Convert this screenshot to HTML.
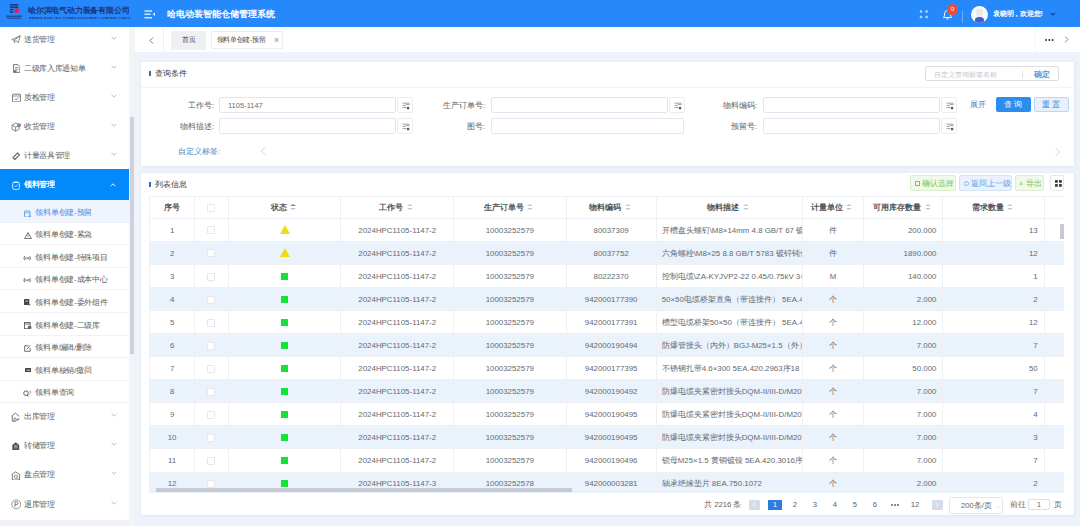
<!DOCTYPE html>
<html><head><meta charset="utf-8">
<style>
*{box-sizing:border-box;margin:0;padding:0}
html,body{width:1080px;height:526px;overflow:hidden;background:#eef2fb;font-family:"Liberation Sans",sans-serif;color:#606266;font-size:8px}
.abs{position:absolute}
#hdr{position:absolute;left:0;top:0;width:1080px;height:27px;background:#2588fb}
#side{position:absolute;left:0;top:27px;width:129px;height:499px;background:#fff}
#sbar{position:absolute;left:129px;top:27px;width:6px;height:499px;background:#f3f4f8}
#tabs{position:absolute;left:135px;top:27px;width:945px;height:25px;background:#fff}
.card{position:absolute;background:#fff;box-shadow:0 0 3px 0.5px rgba(70,80,100,0.10)}
.mi{position:absolute;left:0;width:130px;height:29px}
.mi .t{position:absolute;left:24px;top:0;line-height:29px;font-size:8px;color:#606266}
.mi .ic{position:absolute;left:11px;top:10px;width:9px;height:9px}
.mi .ch{position:absolute;left:110px;top:11px;width:6px;height:6px}
.si{position:absolute;left:0;width:130px;height:22.5px}
.si .t{position:absolute;left:35px;top:0;line-height:22.5px;font-size:7.7px;color:#606266}
.si .ic{position:absolute;left:23px;top:7px;width:8px;height:8px}
.inp{position:absolute;height:16px;border:0.7px solid #e2e5eb;border-radius:2px;background:#fff}
.ib{position:absolute;width:16px;height:16px;border:0.7px solid #eaecf0;border-radius:2px;background:#fff}
.lbl{position:absolute;font-size:7.5px;color:#606266;text-align:right;line-height:16px;padding-top:1px}
table{border-collapse:collapse;table-layout:fixed}
td,th{border:0.6px solid #eff0f4;height:23.05px;text-align:center;font-size:7.9px;color:#666a70;font-weight:normal;white-space:nowrap;overflow:hidden}
th{height:22px;color:#505357;font-weight:bold}
tr.s td{background:#eaf2fc}
.cb{display:inline-block;width:8px;height:8px;border:0.6px solid #e6e7eb;border-radius:1px;background:#fff;vertical-align:middle}
.tri{display:inline-block;width:0;height:0;border-left:5px solid transparent;border-right:5px solid transparent;border-bottom:9.3px solid #ecdc10;vertical-align:middle;position:relative;top:-1px}
.sq{display:inline-block;width:7px;height:7px;background:#14e23a;vertical-align:middle}
.sort{display:inline-block;width:6px;height:7px;vertical-align:middle;margin-left:3.5px;margin-right:2.5px;position:relative;top:-0.5px}
.sort:before{content:"";position:absolute;left:0;top:0;border-left:3px solid transparent;border-right:3px solid transparent;border-bottom:2.8px solid #c6c9cf}
.sort:after{content:"";position:absolute;left:0;top:4.2px;border-left:3px solid transparent;border-right:3px solid transparent;border-top:2.8px solid #c6c9cf}
.sort.a:before{border-bottom-color:#5b8fd0}
.sort.a:after{border-top-color:#a9c6ea}
td.l{text-align:left;padding-left:5px}
td.r{text-align:right;padding-right:6px}
.pg{position:absolute;top:500px;font-size:7.7px;color:#606266;line-height:10px;text-align:center}
</style></head><body>

<!-- HEADER -->
<div id="hdr">
  <!-- logo -->
  <svg class="abs" style="left:5px;top:3px" width="18" height="17" viewBox="0 0 18 17"><g fill="#1c3a8e"><rect x="4.8" y="1" width="8.5" height="1.6"/><rect x="4.8" y="3.4" width="8.5" height="1.6"/><rect x="4.8" y="5.8" width="3.6" height="1.6"/><rect x="4.8" y="8.2" width="3.6" height="1.6"/></g><circle cx="11.7" cy="7.5" r="2.6" fill="#d02a5a"/><g fill="#1c3a8e" opacity="0.9"><rect x="1" y="12.6" width="16" height="1.2"/><rect x="2" y="14.6" width="14" height="1"/></g></svg>
  <div class="abs" style="left:28px;top:5.5px;font-size:7.6px;color:#1b3277;font-weight:bold;letter-spacing:-0.2px;white-space:nowrap;line-height:9px">哈尔滨电气动力装备有限公司</div>
  <div class="abs" style="left:29px;top:16.5px;width:101px;height:2.4px;overflow:hidden"><div style="transform:scale(0.5);transform-origin:0 0;font-size:6px;line-height:5px;color:#1b3277;font-weight:bold;white-space:nowrap;letter-spacing:0.75px">HARBIN ELECTRIC POWER EQUIPMENT COMPANY LIMITED</div></div>
  <!-- menu icon -->
  <svg class="abs" style="left:143.5px;top:9.5px" width="12" height="9" viewBox="0 0 12 9"><rect x="0.5" y="0.4" width="7.5" height="1.3" fill="#eaf6ff"/><rect x="0.5" y="3.6" width="6" height="1.3" fill="#eaf6ff"/><rect x="0.5" y="7.1" width="7.5" height="1.3" fill="#eaf6ff"/><path d="M8.6 4.25 L11 2.6 L11 5.9 Z" fill="#eaf6ff"/></svg>
  <div class="abs" style="left:167px;top:7.5px;font-size:9.2px;color:#fff;font-weight:bold;font-family:'Liberation Serif',serif;white-space:nowrap;line-height:12px">哈电动装智能仓储管理系统</div>
  <!-- right icons -->
  <svg class="abs" style="left:918px;top:9px" width="12" height="11" viewBox="0 0 12 11"><g fill="#a6dcff"><rect x="1.8" y="1.3" width="2.4" height="2.4" rx="0.6"/><rect x="7.4" y="1.3" width="2.4" height="2.4" rx="0.6"/><rect x="1.8" y="6.8" width="2.4" height="2.4" rx="0.6"/><rect x="7.4" y="6.8" width="2.4" height="2.4" rx="0.6"/></g></svg>
  <svg class="abs" style="left:942px;top:8px" width="11" height="12" viewBox="0 0 11 12"><path d="M1.5 9.5 Q2.6 8.2 2.6 6 Q2.6 2.6 5.5 2.4 Q8.4 2.6 8.4 6 Q8.4 8.2 9.5 9.5 Z" fill="none" stroke="#fff" stroke-width="0.9" stroke-linejoin="round"/><path d="M4.3 10.9 H6.7" stroke="#fff" stroke-width="0.9"/></svg>
  <div class="abs" style="left:947px;top:4px;width:11px;height:11px;border-radius:50%;background:#e8503f;color:#fff;font-size:6px;text-align:center;line-height:11px">0</div>
  <div class="abs" style="left:962px;top:11px;width:1px;height:12px;background:#6aaefc"></div>
  <div class="abs" style="left:970.8px;top:5.7px;width:17px;height:17px;border-radius:50%;background:#f6f9fd;overflow:hidden">
    <div class="abs" style="left:5px;top:3.5px;width:7px;height:8px;border-radius:45%;background:#e9ebf1;border-top:1.2px solid #f0dcc0"></div>
    <div class="abs" style="left:4.2px;top:11.8px;width:8.6px;height:6px;border-radius:50% 50% 0 0;background:#3f5fd0"></div>
  </div>
  <div class="abs" style="left:993px;top:8.5px;font-size:7.1px;color:#fff;font-weight:bold;white-space:nowrap;line-height:10px;letter-spacing:-0.2px">袁晓明，欢迎您!</div>
  <div class="abs" style="left:1050px;top:13px;border-left:3px solid transparent;border-right:3px solid transparent;border-top:3.5px solid #1f4fa8"></div>
</div>

<!-- SIDEBAR -->
<div id="side">
<div class="abs" style="left:24px;top:7.0px;font-size:7.6px;line-height:12px;color:#5c5f64;white-space:nowrap;letter-spacing:-0.35px">送货管理</div>
<svg class="abs" style="left:10.5px;top:7.5px" width="10" height="8.5" viewBox="0 0 10 8.5"><path d="M0.8 4.6 L9.2 0.8 L7.4 7.6 L4.8 5.6 L3.4 7.6 L3.2 5.2 Z M3.2 5.2 L9.2 0.8" fill="none" stroke="#6a6d73" stroke-width="0.8" stroke-linejoin="round"/></svg>
<svg class="abs" style="left:110.5px;top:8.5px" width="6" height="4" viewBox="0 0 6 4"><path d="M0.5 0.7 L3 3.2 L5.5 0.7" fill="none" stroke="#a9adb5" stroke-width="0.8"/></svg>
<div class="abs" style="left:24px;top:36.0px;font-size:7.6px;line-height:12px;color:#5c5f64;white-space:nowrap;letter-spacing:-0.35px">二级库入库通知单</div>
<svg class="abs" style="left:12.5px;top:36.5px" width="7.5" height="9" viewBox="0 0 7.5 9"><path d="M0.6 0.6 H5 L6.9 2.5 V8.4 H0.6 Z" fill="none" stroke="#6a6d73" stroke-width="0.9"/><path d="M2 3.5 H5.5 M2 5.3 H5.5" stroke="#6a6d73" stroke-width="0.7"/><rect x="0.6" y="6.3" width="3" height="2.1" fill="#6a6d73"/></svg>
<svg class="abs" style="left:110.5px;top:37.5px" width="6" height="4" viewBox="0 0 6 4"><path d="M0.5 0.7 L3 3.2 L5.5 0.7" fill="none" stroke="#a9adb5" stroke-width="0.8"/></svg>
<div class="abs" style="left:24px;top:65.0px;font-size:7.6px;line-height:12px;color:#5c5f64;white-space:nowrap;letter-spacing:-0.35px">质检管理</div>
<svg class="abs" style="left:11.5px;top:65.5px" width="9" height="9.5" viewBox="0 0 9 9.5"><rect x="0.6" y="1.2" width="7.8" height="7.7" rx="0.6" fill="none" stroke="#6a6d73" stroke-width="0.9"/><path d="M0.6 3 H8.4" stroke="#6a6d73" stroke-width="0.7"/><path d="M2.8 5.6 L4.2 6.9 L6.4 4.5" fill="none" stroke="#6a6d73" stroke-width="0.8"/></svg>
<svg class="abs" style="left:110.5px;top:66.5px" width="6" height="4" viewBox="0 0 6 4"><path d="M0.5 0.7 L3 3.2 L5.5 0.7" fill="none" stroke="#a9adb5" stroke-width="0.8"/></svg>
<div class="abs" style="left:24px;top:94.0px;font-size:7.6px;line-height:12px;color:#5c5f64;white-space:nowrap;letter-spacing:-0.35px">收货管理</div>
<svg class="abs" style="left:10.8px;top:94.5px" width="10.5" height="10" viewBox="0 0 10.5 10"><path d="M1 3.2 L4.8 1.2 L8.2 3 V7.2 L4.6 9.2 L1 7.2 Z M1 3.2 L4.6 5.2 L8.2 3 M4.6 5.2 V9.2" fill="none" stroke="#6a6d73" stroke-width="0.8" stroke-linejoin="round"/><circle cx="8" cy="3.2" r="2" fill="#85888d"/></svg>
<svg class="abs" style="left:110.5px;top:95.5px" width="6" height="4" viewBox="0 0 6 4"><path d="M0.5 0.7 L3 3.2 L5.5 0.7" fill="none" stroke="#a9adb5" stroke-width="0.8"/></svg>
<div class="abs" style="left:24px;top:123.0px;font-size:7.6px;line-height:12px;color:#5c5f64;white-space:nowrap;letter-spacing:-0.35px">计量器具管理</div>
<svg class="abs" style="left:11.5px;top:124.5px" width="8.5" height="8.5" viewBox="0 0 8.5 8.5"><path d="M5.6 1 L7.5 2.9 L2.9 7.5 L1 5.6 Z" fill="none" stroke="#6a6d73" stroke-width="1.2" stroke-linejoin="round"/></svg>
<svg class="abs" style="left:110.5px;top:124.5px" width="6" height="4" viewBox="0 0 6 4"><path d="M0.5 0.7 L3 3.2 L5.5 0.7" fill="none" stroke="#a9adb5" stroke-width="0.8"/></svg>
<div class="abs" style="left:24px;top:384.0px;font-size:7.6px;line-height:12px;color:#5c5f64;white-space:nowrap;letter-spacing:-0.35px">出库管理</div>
<svg class="abs" style="left:11.3px;top:384.5px" width="9" height="10" viewBox="0 0 9 10"><path d="M0.7 4.2 L4.3 1 L8.3 4.4 M1.3 3.8 V9.2 H5" fill="none" stroke="#6a6d73" stroke-width="0.9" stroke-linejoin="round"/><path d="M3 9.2 V6 H5 V9.2" fill="none" stroke="#6a6d73" stroke-width="0.7"/><path d="M5.5 8.5 L8.2 6.8" stroke="#6a6d73" stroke-width="1.2"/></svg>
<svg class="abs" style="left:110.5px;top:385.5px" width="6" height="4" viewBox="0 0 6 4"><path d="M0.5 0.7 L3 3.2 L5.5 0.7" fill="none" stroke="#a9adb5" stroke-width="0.8"/></svg>
<div class="abs" style="left:24px;top:413.0px;font-size:7.6px;line-height:12px;color:#5c5f64;white-space:nowrap;letter-spacing:-0.35px">转储管理</div>
<svg class="abs" style="left:12.3px;top:414.5px" width="7.5" height="8.5" viewBox="0 0 7.5 8.5"><path d="M0.3 3 L3.75 0.3 L7.2 3 V8.3 H0.3 Z" fill="#505358"/><rect x="2" y="3.4" width="3.5" height="1" fill="#fff" opacity=".7"/><rect x="2" y="5.3" width="3.5" height="1" fill="#fff" opacity=".5"/></svg>
<svg class="abs" style="left:110.5px;top:414.5px" width="6" height="4" viewBox="0 0 6 4"><path d="M0.5 0.7 L3 3.2 L5.5 0.7" fill="none" stroke="#a9adb5" stroke-width="0.8"/></svg>
<div class="abs" style="left:24px;top:442.0px;font-size:7.6px;line-height:12px;color:#5c5f64;white-space:nowrap;letter-spacing:-0.35px">盘点管理</div>
<svg class="abs" style="left:11px;top:443.5px" width="9.5" height="9.5" viewBox="0 0 9.5 9.5"><path d="M0.7 3.6 L4.6 0.8 L8.6 3.6 V9 H1.3 V3.6" fill="none" stroke="#6a6d73" stroke-width="0.9" stroke-linejoin="round"/><circle cx="4.8" cy="5.6" r="1.6" fill="none" stroke="#6a6d73" stroke-width="0.8"/><path d="M5.9 6.7 L7.6 8.4" stroke="#6a6d73" stroke-width="0.8"/></svg>
<svg class="abs" style="left:110.5px;top:443.5px" width="6" height="4" viewBox="0 0 6 4"><path d="M0.5 0.7 L3 3.2 L5.5 0.7" fill="none" stroke="#a9adb5" stroke-width="0.8"/></svg>
<div class="abs" style="left:24px;top:472.0px;font-size:7.6px;line-height:12px;color:#5c5f64;white-space:nowrap;letter-spacing:-0.35px">退库管理</div>
<svg class="abs" style="left:10.8px;top:472px" width="10.5" height="10.5" viewBox="0 0 10.5 10.5"><circle cx="5.25" cy="5.25" r="4.5" fill="none" stroke="#7a7d82" stroke-width="0.8"/><path d="M4 7.8 V2.8 H5.8 Q7 2.8 7 4.2 Q7 5.6 5.8 5.6 H4" fill="none" stroke="#7a7d82" stroke-width="1"/></svg>
<svg class="abs" style="left:110.5px;top:473.5px" width="6" height="4" viewBox="0 0 6 4"><path d="M0.5 0.7 L3 3.2 L5.5 0.7" fill="none" stroke="#a9adb5" stroke-width="0.8"/></svg>
<div class="abs" style="left:0;top:142px;width:129px;height:31px;background:#0289fa"></div>
<svg class="abs" style="left:11.5px;top:153.5px" width="8" height="9" viewBox="0 0 8 9"><rect x="0.6" y="1.2" width="6.8" height="7.2" rx="1.6" fill="none" stroke="#e8f4ff" stroke-width="0.9"/><rect x="2.5" y="0.4" width="3" height="1.6" rx="0.5" fill="#e8f4ff"/><path d="M2.4 4.6 L3.6 5.8 L5.6 3.6" fill="none" stroke="#e8f4ff" stroke-width="0.8"/></svg>
<div class="abs" style="left:24px;top:152px;font-size:7.6px;line-height:12px;color:#fff;font-weight:bold;white-space:nowrap;letter-spacing:-0.35px">领料管理</div>
<svg class="abs" style="left:110px;top:155.5px" width="6" height="4" viewBox="0 0 6 4"><path d="M0.5 3.3 L3 0.8 L5.5 3.3" fill="none" stroke="#fff" stroke-width="0.9"/></svg>
<div class="abs" style="left:0;top:173.0px;width:129px;height:22.6px;background:#eef4fd;border-bottom:0.5px solid #f1f2f4"></div>
<div class="abs" style="left:35px;top:179.5px;font-size:7.5px;line-height:12px;color:#4893e6;white-space:nowrap;letter-spacing:-0.15px">领料单创建-预留</div>
<svg class="abs" style="left:24px;top:182.5px" width="7" height="7.5" viewBox="0 0 7 7.5"><rect x="0.5" y="1" width="5.5" height="6" rx="0.5" fill="none" stroke="#5b9fe0" stroke-width="0.9"/><path d="M0.5 2.8 H6" stroke="#5b9fe0" stroke-width="0.7"/><circle cx="5.8" cy="6.3" r="1" fill="#5b9fe0"/></svg>
<div class="abs" style="left:0;top:195.6px;width:129px;height:22.6px;background:#fff;border-bottom:0.5px solid #f1f2f4"></div>
<div class="abs" style="left:35px;top:202.1px;font-size:7.5px;line-height:12px;color:#5c5f64;white-space:nowrap;letter-spacing:-0.15px">领料单创建-紧急</div>
<svg class="abs" style="left:23.5px;top:204.8px" width="8" height="7.2" viewBox="0 0 8 7.2"><path d="M4 0.6 L7.4 6.6 H0.6 Z" fill="none" stroke="#5d6066" stroke-width="0.9" stroke-linejoin="round"/><path d="M4 2.8 V4.6" stroke="#5d6066" stroke-width="0.7"/></svg>
<div class="abs" style="left:0;top:218.2px;width:129px;height:22.6px;background:#fff;border-bottom:0.5px solid #f1f2f4"></div>
<div class="abs" style="left:35px;top:224.7px;font-size:7.5px;line-height:12px;color:#5c5f64;white-space:nowrap;letter-spacing:-0.15px">领料单创建-特殊项目</div>
<svg class="abs" style="left:23px;top:227.6px" width="8.4" height="6.4" viewBox="0 0 8.4 6.4"><path d="M1.6 1.2 Q0.3 3.2 1.6 5.2 M6.8 1.2 Q8.1 3.2 6.8 5.2" fill="none" stroke="#5d6066" stroke-width="0.9"/><path d="M3 2 Q2.2 3.2 3 4.4 M5.4 2 Q6.2 3.2 5.4 4.4" fill="none" stroke="#5d6066" stroke-width="0.8"/><circle cx="4.2" cy="3.2" r="0.7" fill="#5d6066"/></svg>
<div class="abs" style="left:0;top:240.8px;width:129px;height:22.6px;background:#fff;border-bottom:0.5px solid #f1f2f4"></div>
<div class="abs" style="left:35px;top:247.3px;font-size:7.5px;line-height:12px;color:#5c5f64;white-space:nowrap;letter-spacing:-0.15px">领料单创建-成本中心</div>
<svg class="abs" style="left:23px;top:250.2px" width="8.4" height="6.4" viewBox="0 0 8.4 6.4"><path d="M1.6 1.2 Q0.3 3.2 1.6 5.2 M6.8 1.2 Q8.1 3.2 6.8 5.2" fill="none" stroke="#5d6066" stroke-width="0.9"/><path d="M3 2 Q2.2 3.2 3 4.4 M5.4 2 Q6.2 3.2 5.4 4.4" fill="none" stroke="#5d6066" stroke-width="0.8"/><circle cx="4.2" cy="3.2" r="0.7" fill="#5d6066"/></svg>
<div class="abs" style="left:0;top:263.4px;width:129px;height:22.6px;background:#fff;border-bottom:0.5px solid #f1f2f4"></div>
<div class="abs" style="left:35px;top:269.9px;font-size:7.5px;line-height:12px;color:#5c5f64;white-space:nowrap;letter-spacing:-0.15px">领料单创建-委外组件</div>
<svg class="abs" style="left:24px;top:272.2px" width="6.5" height="6.5" viewBox="0 0 6.5 6.5"><rect x="0" y="0" width="5.3" height="6" rx="0.6" fill="#45484d"/><rect x="1.5" y="1.6" width="2.4" height="1.2" fill="#fff" opacity=".6"/><circle cx="5.5" cy="5.6" r="0.9" fill="#6d7075"/></svg>
<div class="abs" style="left:0;top:286.0px;width:129px;height:22.6px;background:#fff;border-bottom:0.5px solid #f1f2f4"></div>
<div class="abs" style="left:35px;top:292.5px;font-size:7.5px;line-height:12px;color:#5c5f64;white-space:nowrap;letter-spacing:-0.15px">领料单创建-二级库</div>
<svg class="abs" style="left:23.8px;top:294.5px" width="7.8" height="7.5" viewBox="0 0 7.8 7.5"><rect x="0.5" y="0.5" width="5.6" height="6.2" fill="none" stroke="#5d6066" stroke-width="0.9"/><path d="M0.5 2 H6" stroke="#5d6066" stroke-width="0.9"/><circle cx="5.6" cy="5.4" r="1.9" fill="#6a6d72"/></svg>
<div class="abs" style="left:0;top:308.6px;width:129px;height:22.6px;background:#fff;border-bottom:0.5px solid #f1f2f4"></div>
<div class="abs" style="left:35px;top:315.1px;font-size:7.5px;line-height:12px;color:#5c5f64;white-space:nowrap;letter-spacing:-0.15px">领料单编辑/删除</div>
<svg class="abs" style="left:24.3px;top:317.5px" width="7" height="7" viewBox="0 0 7 7"><path d="M4.5 0.8 H0.7 V6.3 H6.2 V3" fill="none" stroke="#5d6066" stroke-width="0.9"/><path d="M2.8 4 L6.5 0.4" stroke="#5d6066" stroke-width="0.9"/></svg>
<div class="abs" style="left:0;top:331.2px;width:129px;height:22.6px;background:#fff;border-bottom:0.5px solid #f1f2f4"></div>
<div class="abs" style="left:35px;top:337.7px;font-size:7.5px;line-height:12px;color:#5c5f64;white-space:nowrap;letter-spacing:-0.15px">领料单核销/撤回</div>
<svg class="abs" style="left:24.5px;top:340.5px" width="6.5" height="4.8" viewBox="0 0 6.5 4.8"><rect x="0" y="0" width="6.5" height="4.5" rx="1" fill="#3e4146"/><rect x="1.5" y="1.5" width="3.5" height="1.5" fill="#fff" opacity=".5"/></svg>
<div class="abs" style="left:0;top:353.8px;width:129px;height:22.6px;background:#fff;border-bottom:0.5px solid #f1f2f4"></div>
<div class="abs" style="left:35px;top:360.3px;font-size:7.5px;line-height:12px;color:#5c5f64;white-space:nowrap;letter-spacing:-0.15px">领料单查询</div>
<svg class="abs" style="left:23px;top:362.5px" width="8.5" height="7.2" viewBox="0 0 8.5 7.2"><circle cx="3" cy="3.2" r="2.3" fill="none" stroke="#5d6066" stroke-width="1"/><path d="M4.2 4.8 L5.4 6.6" stroke="#5d6066" stroke-width="1"/><path d="M6.3 1 Q8 1 7.8 2.2 Q7.6 3 6.8 3.4 V4.4" fill="none" stroke="#8a8d92" stroke-width="0.8"/></svg>
</div>
<div class="abs" style="left:0;top:520px;width:129px;height:6px;background:#eff1f6"></div>
<div id="sbar"><div class="abs" style="left:1px;top:90px;width:4px;height:237px;background:#cfd1e0"></div></div>

<!-- TABS -->
<div id="tabs">
  <svg class="abs" style="left:14px;top:10px" width="5" height="7" viewBox="0 0 5 7"><path d="M4 0.5 L1 3.5 L4 6.5" fill="none" stroke="#606266" stroke-width="0.9"/></svg>
  <div class="abs" style="left:28px;top:0;width:1px;height:25px;background:#f0f0f0"></div>
  <div class="abs" style="left:36px;top:4px;width:35px;height:18.5px;background:#eef0f4;font-size:6.8px;color:#444;text-align:center;line-height:17px">首页</div>
  <div class="abs" style="left:75.5px;top:4px;width:72.5px;height:18px;background:#fff;border:0.6px solid #eceef1;font-size:6.8px;color:#444;line-height:16px;padding-left:5px;white-space:nowrap;letter-spacing:-0.3px">领料单创建-预留<span style="position:absolute;left:62.5px;top:0;font-size:8.5px;color:#8a8a8a;line-height:16px">×</span></div>
  <div class="abs" style="left:900px;top:0;width:1px;height:25px;background:#f6f6f6"></div>
  <svg class="abs" style="left:910px;top:11.6px" width="9" height="2" viewBox="0 0 9 2"><g fill="#2a2a2a"><circle cx="1" cy="1" r="0.95"/><circle cx="4.3" cy="1" r="0.95"/><circle cx="7.6" cy="1" r="0.95"/></g></svg>
  <svg class="abs" style="left:929px;top:9px" width="5" height="7" viewBox="0 0 5 7"><path d="M1 0.5 L4 3.5 L1 6.5" fill="none" stroke="#777" stroke-width="0.8"/></svg>
</div>

<!-- QUERY CARD -->
<div class="card" id="qc" style="left:141px;top:61.8px;width:933px;height:104.3px">
<div class="abs" style="left:8px;top:9px;width:2px;height:5.5px;background:#2f6db5"></div>
<div class="abs" style="left:14px;top:6px;font-size:7.8px;color:#333;line-height:11px">查询条件</div>
<div class="abs" style="left:0;top:25px;width:933px;height:0.6px;background:#f2f3f6"></div>
<div class="abs" style="left:784px;top:4.5px;width:134px;height:15px;border:0.6px solid #dcdfe6;border-radius:2px"><span class="abs" style="left:7.5px;top:2.5px;font-size:6.8px;color:#c3c6cc;white-space:nowrap;line-height:9px">自定义查询标签名称</span><span class="abs" style="left:96px;top:3.5px;width:0.6px;height:7px;background:#dcdfe6"></span><span class="abs" style="left:107.5px;top:2.5px;font-size:7.5px;color:#3f86d6;font-weight:bold;opacity:.85;line-height:9px">确定</span></div>
<div class="lbl" style="left:13px;top:35px;width:60px">工作号:</div><div class="inp" style="left:78px;top:35px;width:177px;font-size:7.5px;color:#6a6d72;line-height:16px;padding-left:8px">1105-1147</div><div class="ib" style="left:256px;top:35px"><svg width="8" height="8" viewBox="0 0 8 8" style="position:absolute;left:4px;top:4px"><path d="M0.5 1.2 H7.5 M0.5 3.4 H3.2 L4.2 2.6 H7.5 M0.5 5.6 H4.5" stroke="#74777c" stroke-width="0.7" fill="none"/><circle cx="6.1" cy="6.1" r="1.3" fill="#55585d"/></svg></div>
<div class="lbl" style="left:13px;top:56px;width:60px">物料描述:</div><div class="inp" style="left:78px;top:56px;width:177px;font-size:7.5px;color:#606266;line-height:14px;padding-left:8px"></div><div class="ib" style="left:256px;top:56px"><svg width="8" height="8" viewBox="0 0 8 8" style="position:absolute;left:4px;top:4px"><path d="M0.5 1.2 H7.5 M0.5 3.4 H3.2 L4.2 2.6 H7.5 M0.5 5.6 H4.5" stroke="#74777c" stroke-width="0.7" fill="none"/><circle cx="6.1" cy="6.1" r="1.3" fill="#55585d"/></svg></div>
<div class="lbl" style="left:284px;top:35px;width:60px">生产订单号:</div><div class="inp" style="left:350px;top:35px;width:177px;font-size:7.5px;color:#606266;line-height:14px;padding-left:8px"></div><div class="ib" style="left:528px;top:35px"><svg width="8" height="8" viewBox="0 0 8 8" style="position:absolute;left:4px;top:4px"><path d="M0.5 1.2 H7.5 M0.5 3.4 H3.2 L4.2 2.6 H7.5 M0.5 5.6 H4.5" stroke="#74777c" stroke-width="0.7" fill="none"/><circle cx="6.1" cy="6.1" r="1.3" fill="#55585d"/></svg></div>
<div class="lbl" style="left:284px;top:56px;width:60px">图号:</div><div class="inp" style="left:350px;top:56px;width:193px;font-size:7.5px;color:#606266;line-height:14px;padding-left:8px"></div>
<div class="lbl" style="left:556px;top:35px;width:60px">物料编码:</div><div class="inp" style="left:622px;top:35px;width:177px;font-size:7.5px;color:#606266;line-height:14px;padding-left:8px"></div><div class="ib" style="left:800px;top:35px"><svg width="8" height="8" viewBox="0 0 8 8" style="position:absolute;left:4px;top:4px"><path d="M0.5 1.2 H7.5 M0.5 3.4 H3.2 L4.2 2.6 H7.5 M0.5 5.6 H4.5" stroke="#74777c" stroke-width="0.7" fill="none"/><circle cx="6.1" cy="6.1" r="1.3" fill="#55585d"/></svg></div>
<div class="lbl" style="left:556px;top:56px;width:60px">预留号:</div><div class="inp" style="left:622px;top:56px;width:177px;font-size:7.5px;color:#606266;line-height:14px;padding-left:8px"></div><div class="ib" style="left:800px;top:56px"><svg width="8" height="8" viewBox="0 0 8 8" style="position:absolute;left:4px;top:4px"><path d="M0.5 1.2 H7.5 M0.5 3.4 H3.2 L4.2 2.6 H7.5 M0.5 5.6 H4.5" stroke="#74777c" stroke-width="0.7" fill="none"/><circle cx="6.1" cy="6.1" r="1.3" fill="#55585d"/></svg></div>
<div class="abs" style="left:829px;top:37px;font-size:7.5px;color:#3b7fd0;line-height:12px">展开</div>
<div class="abs" style="left:855px;top:35px;width:35px;height:15px;background:#2d8cf0;border-radius:2px;color:#fff;font-size:7.5px;text-align:center;line-height:15px;letter-spacing:2px">查询</div>
<div class="abs" style="left:893px;top:35px;width:35px;height:15px;background:#e6f1fd;border:0.6px solid #bcd7f5;border-radius:2px;color:#3b7fd0;font-size:7.5px;text-align:center;line-height:14px;letter-spacing:2px">重置</div>
<div class="abs" style="left:37px;top:84px;font-size:7.5px;color:#4f86c0;line-height:12px">自定义标签:</div>
<svg class="abs" style="left:118.5px;top:84px" width="7" height="10" viewBox="0 0 7 10"><path d="M5.5 0.8 L1.5 5 L5.5 9.2" fill="none" stroke="#cfd1d5" stroke-width="0.9"/></svg>
<svg class="abs" style="left:913px;top:85px" width="7" height="10" viewBox="0 0 7 10"><path d="M1.5 0.8 L5.5 5 L1.5 9.2" fill="none" stroke="#cfd1d5" stroke-width="0.9"/></svg>
</div>

<!-- LIST CARD -->
<div class="card" id="lc" style="left:141px;top:172.5px;width:933px;height:342px">
<div class="abs" style="left:8px;top:9px;width:2px;height:5.5px;background:#2f6db5"></div>
<div class="abs" style="left:14px;top:6px;font-size:7.8px;color:#333;line-height:11px">列表信息</div>
<div class="abs" style="left:769px;top:2px;width:45.5px;height:16px;background:#f0f9eb;border:0.6px solid #d9efc9;border-radius:2px"><span class="abs" style="left:11px;top:0;color:#7ac25a;font-size:7.6px;line-height:15px;white-space:nowrap">确认选择</span><span class="abs" style="left:4px;top:5.5px;width:4.5px;height:4.5px;border:0.6px solid #7cc84f"></span></div>
<div class="abs" style="left:818px;top:2px;width:52.5px;height:16px;background:#e9f2fd;border:0.6px solid #d3e4f8;border-radius:2px"><span class="abs" style="left:11px;top:0;color:#5a9de2;font-size:7.6px;line-height:15px;white-space:nowrap">返回上一级</span><span class="abs" style="left:3.5px;top:5px;width:5px;height:5px;border:0.6px solid #8ab9ee;border-radius:50%"></span></div>
<div class="abs" style="left:874px;top:2px;width:29px;height:16px;background:#f0f9eb;border:0.6px solid #d9efc9;border-radius:2px"><span class="abs" style="left:10px;top:0;color:#7ac25a;font-size:7.6px;line-height:15px;white-space:nowrap">导出</span><span class="abs" style="left:3px;top:5px;width:0;height:0;border-left:2.5px solid transparent;border-right:2.5px solid transparent;border-bottom:4.5px solid #b5dc9c"></span></div>
<div class="abs" style="left:909px;top:2px;width:14px;height:16px;background:#fff;border:0.6px solid #e4e7ed;border-radius:2px"><svg class="abs" style="left:3.5px;top:4.5px" width="7" height="7" viewBox="0 0 7 7"><g fill="#3a3a3a"><rect x="0" y="0" width="2.8" height="2.8" rx="0.6"/><rect x="4" y="0" width="2.8" height="2.8" rx="0.6"/><rect x="0" y="4" width="2.8" height="2.8" rx="0.6"/><rect x="4" y="4" width="2.8" height="2.8" rx="0.6"/></g></svg></div>
<div class="abs" style="left:8.2px;top:23.5px;width:915px;height:296.5px;overflow:hidden"><table style="width:915px">
<colgroup><col style="width:44.8px"><col style="width:34px"><col style="width:112.5px"><col style="width:112.5px"><col style="width:112.6px"><col style="width:90.1px"><col style="width:146px"><col style="width:61.6px"><col style="width:79.2px"><col style="width:101.3px"><col style="width:20.4px"></colgroup>
<tr><th>序号</th><th><span class="cb"></span></th><th>状态<span class="sort a"></span></th><th>工作号<span class="sort"></span></th><th>生产订单号<span class="sort"></span></th><th>物料编码<span class="sort"></span></th><th>物料描述<span class="sort"></span></th><th>计量单位<span class="sort"></span></th><th>可用库存数量<span class="sort"></span></th><th>需求数量<span class="sort"></span></th><th></th></tr>
<tr><td>1</td><td><span class="cb"></span></td><td><span class="tri"></span></td><td>2024HPC1105-1147-2</td><td>10003252579</td><td>80037309</td><td class="l">开槽盘头螺钉\M8×14mm 4.8 GB/T 67 镀锌钝化</td><td>件</td><td class="r">200.000</td><td class="r">13</td><td></td></tr>
<tr class="s"><td>2</td><td><span class="cb"></span></td><td><span class="tri"></span></td><td>2024HPC1105-1147-2</td><td>10003252579</td><td>80037752</td><td class="l">六角螺栓\M8×25 8.8 GB/T 5783 镀锌钝化</td><td>件</td><td class="r">1890.000</td><td class="r">12</td><td></td></tr>
<tr><td>3</td><td><span class="cb"></span></td><td><span class="sq"></span></td><td>2024HPC1105-1147-2</td><td>10003252579</td><td>80222370</td><td class="l">控制电缆\ZA-KYJVP2-22 0.45/0.75kV 3×1.5</td><td>M</td><td class="r">140.000</td><td class="r">1</td><td></td></tr>
<tr class="s"><td>4</td><td><span class="cb"></span></td><td><span class="sq"></span></td><td>2024HPC1105-1147-2</td><td>10003252579</td><td>942000177390</td><td class="l">50×50电缆桥架直角（带连接件） 5EA.420</td><td>个</td><td class="r">2.000</td><td class="r">2</td><td></td></tr>
<tr><td>5</td><td><span class="cb"></span></td><td><span class="sq"></span></td><td>2024HPC1105-1147-2</td><td>10003252579</td><td>942000177391</td><td class="l">槽型电缆桥架50×50（带连接件） 5EA.420</td><td>个</td><td class="r">12.000</td><td class="r">12</td><td></td></tr>
<tr class="s"><td>6</td><td><span class="cb"></span></td><td><span class="sq"></span></td><td>2024HPC1105-1147-2</td><td>10003252579</td><td>942000190494</td><td class="l">防爆管接头（内外）BGJ-M25×1.5（外）</td><td>个</td><td class="r">7.000</td><td class="r">7</td><td></td></tr>
<tr><td>7</td><td><span class="cb"></span></td><td><span class="sq"></span></td><td>2024HPC1105-1147-2</td><td>10003252579</td><td>942000177395</td><td class="l">不锈钢扎带4.6×300 5EA.420.2963序18</td><td>个</td><td class="r">50.000</td><td class="r">50</td><td></td></tr>
<tr class="s"><td>8</td><td><span class="cb"></span></td><td><span class="sq"></span></td><td>2024HPC1105-1147-2</td><td>10003252579</td><td>942000190492</td><td class="l">防爆电缆夹紧密封接头DQM-II/III-D/M20</td><td>个</td><td class="r">7.000</td><td class="r">7</td><td></td></tr>
<tr><td>9</td><td><span class="cb"></span></td><td><span class="sq"></span></td><td>2024HPC1105-1147-2</td><td>10003252579</td><td>942000190495</td><td class="l">防爆电缆夹紧密封接头DQM-II/III-D/M20</td><td>个</td><td class="r">7.000</td><td class="r">4</td><td></td></tr>
<tr class="s"><td>10</td><td><span class="cb"></span></td><td><span class="sq"></span></td><td>2024HPC1105-1147-2</td><td>10003252579</td><td>942000190495</td><td class="l">防爆电缆夹紧密封接头DQM-II/III-D/M20</td><td>个</td><td class="r">7.000</td><td class="r">3</td><td></td></tr>
<tr><td>11</td><td><span class="cb"></span></td><td><span class="sq"></span></td><td>2024HPC1105-1147-2</td><td>10003252579</td><td>942000190496</td><td class="l">锁母M25×1.5 黄铜镀镍 5EA.420.3016序号</td><td>个</td><td class="r">7.000</td><td class="r">7</td><td></td></tr>
<tr class="s"><td>12</td><td><span class="cb"></span></td><td><span class="sq"></span></td><td>2024HPC1105-1147-3</td><td>10003252578</td><td>942000003281</td><td class="l">轴承绝缘垫片 8EA.750.1072</td><td>个</td><td class="r">2.000</td><td class="r">2</td><td></td></tr>
</table></div>
<div class="abs" style="left:8.5px;top:315.5px;width:916.5px;height:4px;background:transparent"><div class="abs" style="left:6px;top:0;width:416px;height:4px;background:#c6cad6"></div></div>
<div class="abs" style="left:919px;top:51px;width:4px;height:15.5px;background:#c6cad6"></div>
<div class="pg" style="left:563px;top:327px;white-space:nowrap">共 2216 条</div>
<div class="abs" style="left:608px;top:327px;width:10.5px;height:10.5px;background:#d3dce8;border-radius:1px"><svg class="abs" style="left:3px;top:2.5px" width="4" height="5.5" viewBox="0 0 4 5.5"><path d="M3.3 0.4 L0.8 2.75 L3.3 5.1" fill="none" stroke="#fff" stroke-width="0.9"/></svg></div>
<div class="abs" style="left:627px;top:327px;width:14px;height:10.5px;background:#2d7de0;color:#fff;font-size:7px;text-align:center;line-height:10.5px">1</div>
<div class="pg" style="left:644px;top:327px;width:20px;">2</div>
<div class="pg" style="left:664px;top:327px;width:20px;">3</div>
<div class="pg" style="left:684px;top:327px;width:20px;">4</div>
<div class="pg" style="left:704px;top:327px;width:20px;">5</div>
<div class="pg" style="left:724px;top:327px;width:20px;">6</div>
<svg class="abs" style="left:750px;top:331.5px" width="8" height="2" viewBox="0 0 8 2"><g fill="#555"><circle cx="1" cy="1" r="0.9"/><circle cx="4" cy="1" r="0.9"/><circle cx="7" cy="1" r="0.9"/></g></svg>
<div class="pg" style="left:764px;top:327px;width:20px;">12</div>
<div class="abs" style="left:790.5px;top:327px;width:11px;height:10.5px;background:#d3dce8;border-radius:1px"><svg class="abs" style="left:3.5px;top:2.5px" width="4" height="5.5" viewBox="0 0 4 5.5"><path d="M0.7 0.4 L3.2 2.75 L0.7 5.1" fill="none" stroke="#fff" stroke-width="0.9"/></svg></div>
<div class="abs" style="left:807.5px;top:324.5px;width:54px;height:17px;border:0.6px solid #e4e7ed;border-radius:2px;font-size:7.6px;color:#606266;line-height:16px;padding-left:11.5px;white-space:nowrap">200条/页<svg class="abs" style="left:46px;top:7.5px" width="4" height="3" viewBox="0 0 4 3"><path d="M0.4 0.5 L2 2.2 L3.6 0.5" fill="none" stroke="#c0c4cc" stroke-width="0.6"/></svg></div>
<div class="pg" style="left:868.5px;top:327px;white-space:nowrap">前往</div>
<div class="abs" style="left:887px;top:326.5px;width:22px;height:10.5px;border:0.6px solid #dcdfe6;border-radius:2px;font-size:7px;color:#606266;text-align:center;line-height:9.5px">1</div>
<div class="pg" style="left:913px;top:327px;white-space:nowrap">页</div>
</div>

</body></html>
